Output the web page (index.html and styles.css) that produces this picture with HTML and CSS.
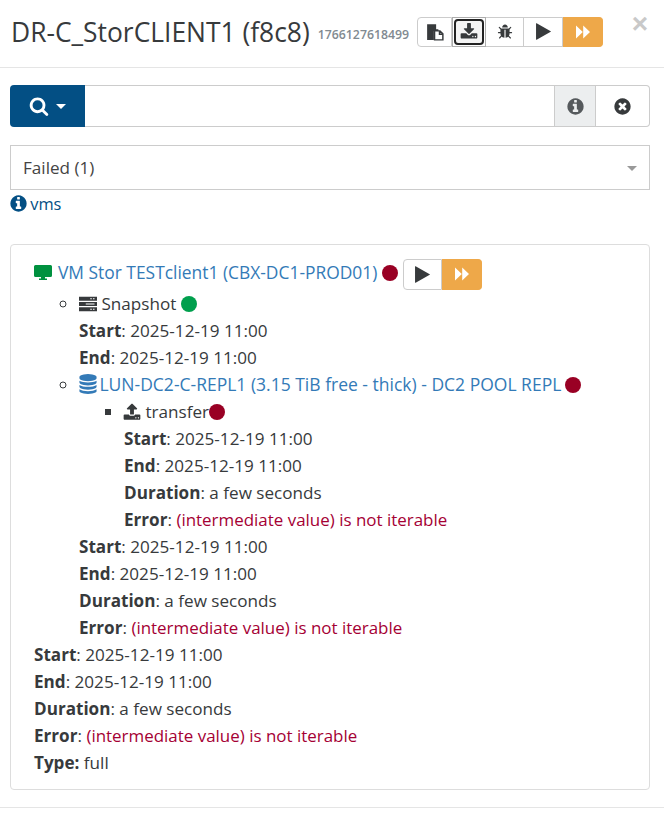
FILE: index.html
```html
<!DOCTYPE html>
<html lang="en">
  <head>
    <meta charset="UTF-8" />
    <title>Backup restore</title>
    <link rel="stylesheet" href="styles.css">
  </head>

  <body>
    <svg class="defs" xmlns="http://www.w3.org/2000/svg">
      <symbol id="i-search" viewBox="0 0 1792 1792"><path d="M1216 832q0-185-131.5-316.5t-316.5-131.5-316.5 131.5-131.5 316.5 131.5 316.5 316.5 131.5 316.5-131.5 131.5-316.5zm512 832q0 52-38 90t-90 38q-54 0-90-38l-343-342q-179 124-399 124-143 0-273.5-55.5t-225-150-150-225-55.5-273.5 55.5-273.5 150-225 225-150 273.5-55.5 273.5 55.5 225 150 150 225 55.5 273.5q0 220-124 399l343 343q37 37 37 90z"/></symbol>
      <symbol id="i-info" viewBox="0 0 1792 1792"><path d="M1152 1376v-160q0-14-9-23t-23-9h-96v-512q0-14-9-23t-23-9h-320q-14 0-23 9t-9 23v160q0 14 9 23t23 9h96v320h-96q-14 0-23 9t-9 23v160q0 14 9 23t23 9h448q14 0 23-9t9-23zm-128-896v-160q0-14-9-23t-23-9h-192q-14 0-23 9t-9 23v160q0 14 9 23t23 9h192q14 0 23-9t9-23zm640 416q0 209-103 385.5t-279.5 279.5-385.5 103-385.5-103-279.5-279.5-103-385.5 103-385.5 279.5-279.5 385.5-103 385.5 103 279.5 279.5 103 385.5z"/></symbol>
      <symbol id="i-times" viewBox="0 0 1792 1792"><path d="M1277 1122q0-26-19-45l-181-181 181-181q19-19 19-45 0-27-19-46l-90-90q-19-19-46-19-26 0-45 19l-181 181-181-181q-19-19-45-19-27 0-46 19l-90 90q-19 19-19 46 0 26 19 45l181 181-181 181q-19 19-19 45 0 27 19 46l90 90q19 19 46 19 26 0 45-19l181-181 181 181q19 19 45 19 27 0 46-19l90-90q19-19 19-46zm387-226q0 209-103 385.5t-279.5 279.5-385.5 103-385.5-103-279.5-279.5-103-385.5 103-385.5 279.5-279.5 385.5-103 385.5 103 279.5 279.5 103 385.5z"/></symbol>
      <symbol id="i-play" viewBox="0 0 1792 1792"><path d="M1576 927l-1328 738q-23 13-39.5 3t-16.5-36v-1472q0-26 16.5-36t39.5 3l1328 738q23 13 23 31t-23 31z"/></symbol>
      <symbol id="i-forward" viewBox="0 0 16 16"><path d="M1 1.6l6.8 6.4L1 14.4zM8.2 1.6L15 8l-6.8 6.4z"/></symbol>
      <symbol id="i-bug" viewBox="0 0 1792 1792"><path d="M1696 960q0 26-19 45t-45 19h-224q0 171-67 290l208 209q19 19 19 45t-19 45q-18 19-45 19t-45-19l-198-197q-5 5-15 13t-42 28.5-65 36.5-82 29-97 13v-896h-128v896q-51 0-101.5-13.5t-87-33-66-39-43.5-32.5l-15-14-183 207q-20 21-48 21-24 0-43-16-19-18-20.5-44.5t15.5-46.5l202-227q-58-114-58-274h-224q-26 0-45-19t-19-45 19-45 45-19h224v-294l-173-173q-19-19-19-45t19-45 45-19 45 19l173 173h844l173-173q19-19 45-19t45 19 19 45-19 45l-173 173v294h224q26 0 45 19t19 45zm-480-576h-640q0-133 93.5-226.5t226.5-93.5 226.5 93.5 93.5 226.5z"/></symbol>
      <symbol id="i-upload" viewBox="0 0 1792 1792"><path d="M1344 1472q0-26-19-45t-45-19-45 19-19 45 19 45 45 19 45-19 19-45zm256 0q0-26-19-45t-45-19-45 19-19 45 19 45 45 19 45-19 19-45zm128-224v320q0 40-28 68t-68 28h-1472q-40 0-68-28t-28-68v-320q0-40 28-68t68-28h427q21 56 70.5 92t110.5 36h256q61 0 110.5-36t70.5-92h427q40 0 68 28t28 68zm-325-648q-17 40-59 40h-256v448q0 26-19 45t-45 19h-256q-26 0-45-19t-19-45v-448h-256q-42 0-59-40-17-39 14-69l448-448q18-19 45-19t45 19l448 448q31 30 14 69z"/></symbol>
      <symbol id="i-download" viewBox="0 0 1792 1792"><path d="M1344 1344q0-26-19-45t-45-19-45 19-19 45 19 45 45 19 45-19 19-45zm256 0q0-26-19-45t-45-19-45 19-19 45 19 45 45 19 45-19 19-45zm128-224v320q0 40-28 68t-68 28h-1472q-40 0-68-28t-28-68v-320q0-40 28-68t68-28h465l135 136q58 56 136 56t136-56l136-136h464q40 0 68 28t28 68zm-325-569q17 41-14 70l-448 448q-18 19-45 19t-45-19l-448-448q-31-29-14-70 17-39 59-39h256v-448q0-26 19-45t45-19h256q26 0 45 19t19 45v448h256q42 0 59 39z"/></symbol>
      <symbol id="i-database" viewBox="0 0 1792 1792"><path d="M896 768q237 0 443-43t325-127v170q0 69-103 128t-280 93.5-385 34.5-385-34.5-280-93.5-103-128v-170q119 84 325 127t443 43zm0 768q237 0 443-43t325-127v170q0 69-103 128t-280 93.5-385 34.5-385-34.5-280-93.5-103-128v-170q119 84 325 127t443 43zm0-384q237 0 443-43t325-127v170q0 69-103 128t-280 93.5-385 34.5-385-34.5-280-93.5-103-128v-170q119 84 325 127t443 43zm0-1152q208 0 385 34.5t280 93.5 103 128v128q0 69-103 128t-280 93.5-385 34.5-385-34.5-280-93.5-103-128v-128q0-69 103-128t280-93.5 385-34.5z"/></symbol>
      <symbol id="i-server" viewBox="0 0 16 16"><path d="M0 1.5h16v3.6H0zM0 6.2h16v3.6H0zM0 10.9h16v3.6H0z"/><path fill="#fff" d="M10 2.8h1.4v1H10zM12.4 2.8h1.4v1h-1.4zM6 7.5h7.8v1H6zM10 12.2h1.4v1H10zM12.4 12.2h1.4v1h-1.4z"/></symbol>
      <symbol id="i-desktop" viewBox="0 0 18 16"><path d="M1.5 0h15A1.5 1.5 0 0 1 18 1.5v9a1.5 1.5 0 0 1-1.5 1.5H11v1.6h2V15H5v-1.4h2V12H1.5A1.5 1.5 0 0 1 0 10.5v-9A1.5 1.5 0 0 1 1.5 0z"/></symbol>
      <symbol id="i-files" viewBox="0 0 16 16"><path d="M1 1h8v4.5h2V7H7v8H1z"/><path fill="#fff" stroke="currentColor" stroke-width="1.3" d="M7.6 7.6v7.4h7.4V9.6l-2.6-2.6h-4.8zM12 7v3h3"/></symbol>
    </svg>

    <header class="head">
      <h4 class="title">DR-C_StorCLIENT1 (f8c8)</h4>
      <small class="stamp">1766127618499</small>
      <div class="btn-group">
        <button class="btn b1"><svg class="icon ic18"><use href="#i-files" /></svg></button>
        <button class="btn b2"><span class="focus-ring"><svg class="icon ic18"><use href="#i-download" /></svg></span></button>
        <button class="btn b3"><svg class="icon ic16"><use href="#i-bug" /></svg></button>
        <button class="btn b4"><svg class="icon ic19"><use href="#i-play" /></svg></button>
        <button class="btn warn b5"><svg class="icon ic16"><use href="#i-forward" /></svg></button>
      </div>
      <button class="close">&times;</button>
    </header>

    <main class="content">
      <div class="search">
        <button class="search-btn"><svg class="icon ic20"><use href="#i-search" /></svg><span class="caret"></span></button>
        <input type="text" class="search-txt" />
        <button class="addon active"><svg class="icon ic19"><use href="#i-info" /></svg></button>
        <button class="addon last"><svg class="icon ic19"><use href="#i-times" /></svg></button>
      </div>

      <div class="select">Failed (1)<span class="select-arrow"></span></div>
      <div class="hint"><svg class="icon ic19 hint-icon"><use href="#i-info" /></svg> vms</div>

      <section class="panel">
        <div class="vm-row">
          <svg class="icon vm-icon"><use href="#i-desktop" /></svg>
          <a class="link">VM Stor TESTclient1 (CBX-DC1-PROD01)</a>
          <span class="dot red"></span>
          <div class="btn-group small">
            <button class="btn"><svg class="icon ic19"><use href="#i-play" /></svg></button>
            <button class="btn warn"><svg class="icon ic16"><use href="#i-forward" /></svg></button>
          </div>
        </div>
        <ul class="tree">
          <li class="circle">
            <svg class="icon ic18"><use href="#i-server" /></svg> Snapshot <span class="dot green"></span>
            <div><b>Start</b>: 2025-12-19 11:00</div>
            <div><b>End</b>: 2025-12-19 11:00</div>
          </li>
          <li class="circle">
            <svg class="icon ic20 db-icon"><use href="#i-database" /></svg>
            <a class="link lun">LUN-DC2-C-REPL1 (3.15 TiB free - thick) - DC2 POOL REPL</a>
            <span class="dot red lun-dot"></span>
            <ul class="tree">
              <li class="square">
                <svg class="icon ic18 up-icon"><use href="#i-upload" /></svg> transfer<span class="dot red"></span>
                <div><b>Start</b>: 2025-12-19 11:00</div>
                <div><b>End</b>: 2025-12-19 11:00</div>
                <div><b>Duration</b>: a few seconds</div>
                <div><b>Error</b>: <span class="err">(intermediate value) is not iterable</span></div>
              </li>
            </ul>
            <div><b>Start</b>: 2025-12-19 11:00</div>
            <div><b>End</b>: 2025-12-19 11:00</div>
            <div><b>Duration</b>: a few seconds</div>
            <div><b>Error</b>: <span class="err">(intermediate value) is not iterable</span></div>
          </li>
        </ul>
        <div><b>Start</b>: 2025-12-19 11:00</div>
        <div><b>End</b>: 2025-12-19 11:00</div>
        <div><b>Duration</b>: a few seconds</div>
        <div><b>Error</b>: <span class="err">(intermediate value) is not iterable</span></div>
        <div><b>Type:</b> full</div>
      </section>
    </main>

    <div class="foot-line"></div>
  </body>
</html>
```
FILE: styles.css
```css
* {
  box-sizing: border-box;
}

html,
body {
  margin: 0;
  padding: 0;
  height: 100%;
  background: #fff;
  overflow: hidden;
}

body {
  font-family: "Open Sans", "Noto Sans", sans-serif;
  font-size: 17.1px;
  line-height: 27px;
  color: #373a3c;
}

.defs {
  display: none;
}

.icon {
  display: inline-block;
  fill: currentColor;
  vertical-align: -3px;
}

.ic16 {
  width: 16px;
  height: 16px;
}

.ic18 {
  width: 18px;
  height: 18px;
}

.ic19 {
  width: 19px;
  height: 19px;
}

.ic20 {
  width: 20px;
  height: 20px;
}

.head {
  display: flex;
  align-items: center;
  height: 68px;
  padding: 0 16px 4px 11px;
  border-bottom: 1px solid #e5e5e5;
}

.title {
  margin: 0;
  font-size: 26.4px;
  font-weight: 400;
  line-height: 30px;
}

.stamp {
  margin: 5px 0 0 8px;
  font-size: 12.3px;
  font-weight: 600;
  color: #818a91;
}

.btn-group {
  display: flex;
  margin-left: 8px;
  height: 30px;
}

.btn {
  display: flex;
  align-items: center;
  justify-content: center;
  padding: 0;
  width: 38px;
  height: 100%;
  border: 1px solid #ccc;
  border-left: none;
  background: #fff;
  color: #373a3c;
}

.btn:first-child {
  border-left: 1px solid #ccc;
  border-radius: 4px 0 0 4px;
}

.btn.warn {
  border-color: #eea849;
  background: #eea849;
  color: #fff;
  border-radius: 0 4px 4px 0;
}

.b1 {
  width: 35px;
}

.b2 {
  width: 34px;
  border-color: #adadad;
  border-left: 1px solid #adadad;
}

.focus-ring {
  display: flex;
  align-items: center;
  justify-content: center;
  width: 30px;
  height: 26px;
  border: 2px solid #222;
  border-radius: 4px;
  background: #f4f4f4;
}

.b3 {
  width: 38px;
}

.b4 {
  width: 39px;
}

.b5 {
  width: 40px;
}

.close {
  margin-left: auto;
  margin-bottom: 16px;
  padding: 0;
  border: none;
  background: none;
  font-family: "Liberation Sans", sans-serif;
  font-size: 28px;
  font-weight: 700;
  line-height: 24px;
  color: #c9c9c9;
}

.content {
  padding: 17px 14px 0 10px;
}

.search {
  display: flex;
  height: 42px;
}

.search-btn {
  display: flex;
  align-items: center;
  justify-content: center;
  gap: 7px;
  width: 75px;
  padding: 0;
  border: none;
  border-radius: 4px 0 0 4px;
  background: #034f84;
  color: #fff;
}

.caret {
  border-top: 5px solid #fff;
  border-left: 5px solid transparent;
  border-right: 5px solid transparent;
}

.search-txt {
  flex: 1;
  min-width: 0;
  border: 1px solid #ccc;
  border-left: none;
  border-right: none;
  outline: none;
}

.addon {
  width: 42px;
  padding: 0;
  border: 1px solid #ccc;
  background: #fff;
  color: #373a3c;
}

.addon.active {
  background: #eceeef;
  color: #55595c;
}

.addon.last {
  width: 54px;
  border-left: none;
  border-radius: 0 4px 4px 0;
}

.select {
  position: relative;
  height: 45px;
  margin-top: 18px;
  padding: 8px 12px;
  border: 1px solid #ccc;
  color: #444;
}

.select-arrow {
  position: absolute;
  top: 20px;
  right: 12px;
  border-top: 5px solid #999;
  border-left: 5px solid transparent;
  border-right: 5px solid transparent;
}

.hint {
  height: 27px;
  font-size: 16.4px;
  color: #034f84;
}

.hint-icon {
  margin: 0 -2px 0 -1px;
}

.panel {
  margin-top: 27px;
  padding: 13px 14px 13px 23px;
  border: 1px solid #ddd;
  border-radius: 4px;
}

.vm-row {
  display: flex;
  align-items: center;
  height: 32px;
  gap: 4px;
}

.vm-row .link {
  margin-bottom: 4px;
}

.vm-row .dot {
  margin: 0 1px 2px 1px;
}

.vm-icon {
  width: 18px;
  height: 16px;
  margin: 0 2px 2px 0;
  color: #00913f;
}

.link {
  font-size: 17.4px;
  color: #337ab7;
}

.lun {
  font-size: 17.5px;
}

.lun-dot {
  margin-left: -1px;
}

.db-icon {
  margin: 0 -3px 0 -1px;
  color: #337ab7;
}

.up-icon {
  margin-left: -1px;
}

.dot {
  display: inline-block;
  width: 16px;
  height: 16px;
  border-radius: 50%;
  vertical-align: -2px;
}

.red {
  background: #990024;
}

.green {
  background: #009f4d;
}

.small {
  height: 31px;
  margin-left: 0;
}

.small .btn {
  width: 39px;
}

.small .warn {
  width: 40px;
}

.tree {
  margin: 0;
  padding: 0 0 0 45px;
}

.circle {
  list-style: circle;
}

.square {
  list-style: square;
}

b {
  font-weight: 700;
}

.err {
  font-size: 16.95px;
  color: #a50034;
}

.foot-line {
  margin-top: 17px;
  border-top: 1px solid #e5e5e5;
}
```
